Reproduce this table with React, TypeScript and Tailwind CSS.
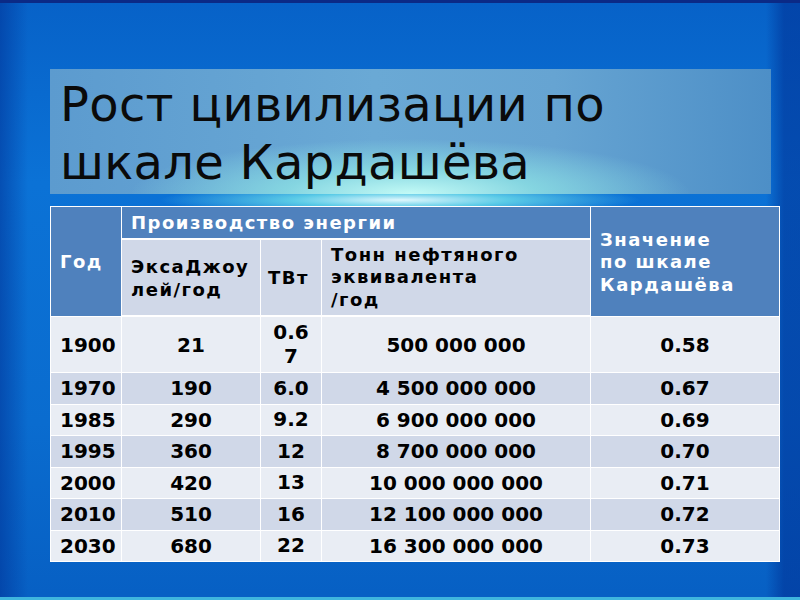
import React from "react";

type Row = { year: string; ej: string; tw: string[]; toe: string; k: string };

const rows: Row[] = [
  { year: "1900", ej: "21", tw: ["0.6", "7"], toe: "500 000 000", k: "0.58" },
  { year: "1970", ej: "190", tw: ["6.0"], toe: "4 500 000 000", k: "0.67" },
  { year: "1985", ej: "290", tw: ["9.2"], toe: "6 900 000 000", k: "0.69" },
  { year: "1995", ej: "360", tw: ["12"], toe: "8 700 000 000", k: "0.70" },
  { year: "2000", ej: "420", tw: ["13"], toe: "10 000 000 000", k: "0.71" },
  { year: "2010", ej: "510", tw: ["16"], toe: "12 100 000 000", k: "0.72" },
  { year: "2030", ej: "680", tw: ["22"], toe: "16 300 000 000", k: "0.73" },
];

export default function App() {
  return (
    <div className="w-[800px] h-[600px] overflow-hidden flex flex-col border-t-[3px] border-b-[3px] border-t-[#0b2a86] border-b-[#3fb6de] bg-[#0a6ad0] bg-[radial-gradient(ellipse_240px_16px_at_50%_197px,rgba(235,255,255,0.95)_0%,rgba(110,225,235,0.8)_45%,rgba(60,170,220,0)_100%),linear-gradient(to_right,rgba(0,50,150,0.55)_0px,rgba(0,50,150,0)_28px,rgba(0,50,150,0)_766px,rgba(0,50,150,0.6)_784px),linear-gradient(to_bottom,#0762c8_0px,#0b72d6_180px,#0a6ccf_420px,#0760c4_590px)] font-['DejaVu_Sans',sans-serif]">
      <div className="ml-[50px] mt-[66px] w-[721px] h-[125px] pl-[10px] pt-[6px] bg-[radial-gradient(ellipse_280px_55px_at_50%_125px,rgba(200,255,248,0.95)_0%,rgba(140,225,228,0.8)_45%,rgba(120,190,215,0)_100%),linear-gradient(to_right,#5c9bcf_0%,#6aa9d5_45%,#66a4d2_70%,#4d8fc7_100%)]">
        <div className="text-[48px] leading-[58px] text-[#0a0a0a] tracking-[0.3px]">
          <div>Рост цивилизации по</div>
          <div>шкале Кардашёва</div>
        </div>
      </div>

      <div className="ml-[50px] mt-[12px] w-[730px] grid grid-cols-[70px_138px_60px_268px_188px] grid-rows-[32px_76px_55px_repeat(6,30.5px)] gap-px bg-white p-px font-bold">
        <div className="row-span-2 bg-[#4f81bd] text-white text-[18px] tracking-[1.5px] pl-[9px] flex items-center">
          Год
        </div>
        <div className="col-span-3 mb-px bg-[#4f81bd] text-white text-[18px] tracking-[1.5px] pl-[9px] flex items-center">
          Производство энергии
        </div>
        <div className="row-span-2 bg-[#4f81bd] text-white text-[18px] tracking-[1.5px] leading-[22.5px] pl-[9px] flex items-center pt-[2px]">
          <div>
            <div>Значение</div>
            <div>по шкале</div>
            <div>Кардашёва</div>
          </div>
        </div>
        <div className="mb-px bg-[#d0d8e8] text-black text-[18px] tracking-[1.5px] leading-[22.5px] pl-[9px] flex items-center pt-[2px]">
          <div>
            <div>ЭксаДжоу</div>
            <div>лей/год</div>
          </div>
        </div>
        <div className="mb-px bg-[#d0d8e8] text-black text-[18px] tracking-[1.5px] pl-[7px] flex items-center">
          ТВт
        </div>
        <div className="mb-px bg-[#d0d8e8] text-black text-[18px] tracking-[1.5px] leading-[22.5px] pl-[9px] flex items-center">
          <div>
            <div>Тонн нефтяного</div>
            <div>эквивалента</div>
            <div>/год</div>
          </div>
        </div>

        {rows.map((r, i) => {
          const bg = i % 2 === 0 ? "bg-[#e9edf4]" : "bg-[#d0d8e8]";
          return (
            <React.Fragment key={r.year}>
              <div className={`${bg} text-[20px] text-black pl-[9px] flex items-center`}>{r.year}</div>
              <div className={`${bg} text-[20px] text-black flex items-center justify-center`}>{r.ej}</div>
              <div className={`${bg} text-[20px] text-black leading-[23.5px] flex flex-col items-center justify-center`}>
                {r.tw.map((t) => (
                  <div key={t}>{t}</div>
                ))}
              </div>
              <div className={`${bg} text-[20px] text-black flex items-center justify-center`}>{r.toe}</div>
              <div className={`${bg} text-[20px] text-black flex items-center justify-center`}>{r.k}</div>
            </React.Fragment>
          );
        })}
      </div>
    </div>
  );
}
